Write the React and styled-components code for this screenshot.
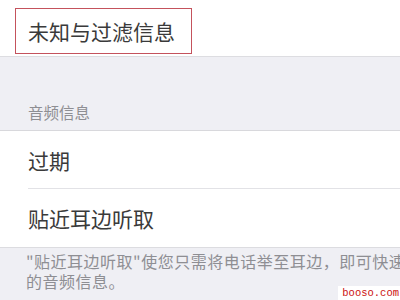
import React from "react";
import styled, { createGlobalStyle } from "styled-components";

const GlobalStyle = createGlobalStyle`
    html, body {
        margin: 0;
        padding: 0;
        background: #efeff4;
    }
    body {
        font-family: "Noto Sans CJK SC", "Noto Sans", sans-serif;
    }
`;

const Screen = styled.div`
    position: relative;
    width: 400px;
    height: 300px;
    overflow: hidden;
    background: #efeff4;
`;

const TopSection = styled.div`
    height: 57px;
    box-sizing: border-box;
    padding: 8px 0 0 15px;
    background: #fff;
    border-bottom: 1px solid #dddde1;
`;

const HighlightBox = styled.div`
    display: flex;
    align-items: center;
    box-sizing: border-box;
    width: 177px;
    height: 46px;
    padding-left: 12px;
    border: 1.5px solid #c4525c;
    font-size: 21px;
    color: #3a3a3a;
`;

const GroupHeader = styled.div`
    display: flex;
    align-items: flex-end;
    box-sizing: border-box;
    height: 74px;
    padding: 0 0 7px 28px;
    font-size: 15.5px;
    color: #8e8e93;
    border-bottom: 1px solid #d8d8dc;
`;

const List = styled.div`
    background: #fff;
    border-bottom: 1px solid #dcdce0;
`;

const Row = styled.div`
    display: flex;
    align-items: center;
    box-sizing: border-box;
    height: 58px;
    margin-left: 28px;
    font-size: 21px;
    color: #3a3a3a;
    border-bottom: ${(p) => (p.$last ? "none" : "1px solid #e2e2e6")};
`;

const Footer = styled.div`
    padding: 3px 0 0 26px;
    font-size: 16px;
    letter-spacing: 0.5px;
    line-height: 20px;
    color: #8e8e93;
    white-space: nowrap;
`;

const Watermark = styled.div`
    position: absolute;
    right: 0;
    bottom: 0;
    padding: 2px 1px 1px 4px;
    background: #fff;
    font-family: "Liberation Mono", monospace;
    font-size: 10.5px;
    line-height: 11px;
    color: #cc1111;
`;

export default function App() {
    return (
        <Screen>
            <GlobalStyle />
            <TopSection>
                <HighlightBox>未知与过滤信息</HighlightBox>
            </TopSection>
            <GroupHeader>音频信息</GroupHeader>
            <List>
                <Row>过期</Row>
                <Row $last>贴近耳边听取</Row>
            </List>
            <Footer>
                "贴近耳边听取"使您只需将电话举至耳边，即可快速
                <br />
                的音频信息。
            </Footer>
            <Watermark>booso.com</Watermark>
        </Screen>
    );
}
